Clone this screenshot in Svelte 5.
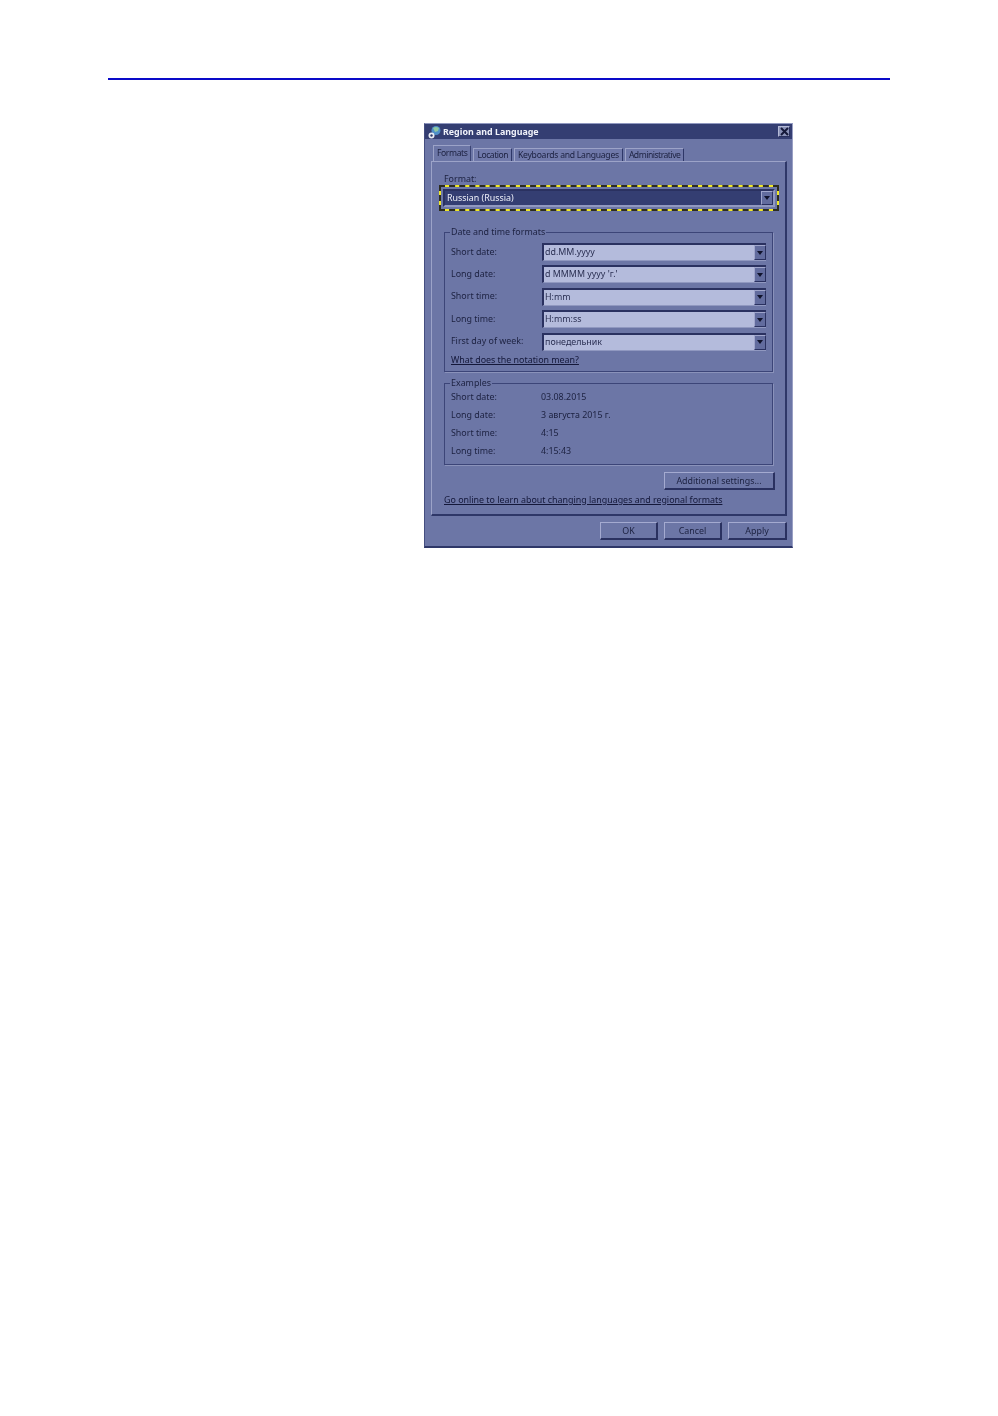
<script>
  const tabs = ['Location', 'Keyboards and Languages', 'Administrative'];
  const formats = [
    ['Short date:', 'dd.MM.yyyy'],
    ['Long date:', "d MMMM yyyy 'г.'"],
    ['Short time:', 'H:mm'],
    ['Long time:', 'H:mm:ss'],
    ['First day of week:', 'понедельник'],
  ];
  const examples = [
    ['Short date:', '03.08.2015'],
    ['Long date:', '3 августа 2015 г.'],
    ['Short time:', '4:15'],
    ['Long time:', '4:15:43'],
  ];
</script>

<div class="page">
  <div class="rule"></div>

  <div class="dialog">
    <div class="titlebar">
      <svg class="globe" width="14" height="14" viewBox="0 0 14 14" aria-hidden="true">
        <circle cx="8" cy="5.5" r="4.5" fill="#4f8fc8" />
        <path d="M5 3 Q8 1 11 3 L10 6 L7 7 Z" fill="#8fc8a0" />
        <circle cx="3.5" cy="10.5" r="3" fill="#e8ecf4" />
        <circle cx="3.5" cy="10.5" r="1.2" fill="#2c3a6c" />
      </svg>
      <span class="title">Region and Language</span>
      <span class="close">
        <svg width="9" height="9" viewBox="0 0 9 9" aria-hidden="true">
          <path d="M1 1 L8 8 M8 1 L1 8" stroke="#15193a" stroke-width="2" />
        </svg>
      </span>
    </div>

    <div class="tabs">
      <span class="tab active">Formats</span>
      {#each tabs as tab}
        <span class="tab">{tab}</span>
      {/each}
    </div>

    <div class="pane">
      <div class="format-label">Format:</div>
      <div class="focus">
        <div class="combo dark">
          <span class="value">Russian (Russia)</span>
          <span class="arrow"><i></i></span>
        </div>
      </div>

      <fieldset class="group formats">
        <legend>Date and time formats</legend>
        {#each formats as [label, value]}
          <div class="row">
            <span class="label">{label}</span>
            <div class="combo">
              <span class="value">{value}</span>
              <span class="arrow"><i></i></span>
            </div>
          </div>
        {/each}
        <div class="link notation">What does the notation mean?</div>
      </fieldset>

      <fieldset class="group examples">
        <legend>Examples</legend>
        {#each examples as [label, value]}
          <div class="example">
            <span>{label}</span>
            <span>{value}</span>
          </div>
        {/each}
      </fieldset>

      <div class="extra">
        <span class="btn additional">Additional settings...</span>
      </div>
      <div class="link online">Go online to learn about changing languages and regional formats</div>
    </div>

    <div class="actions">
      <span class="btn">OK</span>
      <span class="btn">Cancel</span>
      <span class="btn">Apply</span>
    </div>
  </div>
</div>

<style>
  :global(body) {
    margin: 0;
    background: #fff;
  }
  .page {
    height: 1416px;
    padding-top: 78px;
    box-sizing: border-box;
    font-family: "Noto Sans", "Liberation Sans", sans-serif;
    font-size: 8.9px;
    color: #1c2140;
  }
  .rule {
    height: 2px;
    margin: 0 108px;
    background: #0a0ac8;
  }
  .dialog {
    box-sizing: border-box;
    width: 369px;
    height: 425px;
    margin: 43px 0 0 424px;
    background: #6c76a6;
    border: 1px solid #9098c0;
    border-right-color: #9aa0c4;
    border-bottom: 2px solid #2e3768;
    border-left-color: #454e80;
    filter: blur(0.35px);
  }
  .titlebar {
    display: flex;
    align-items: center;
    height: 15px;
    padding: 0 2px 0 3px;
    background: #343e72;
    color: #f0f2fa;
  }
  .globe {
    flex: none;
  }
  .title {
    flex: 1;
    font-weight: 700;
    font-size: 8.9px;
    padding-left: 1px;
  }
  .close {
    display: flex;
    align-items: center;
    justify-content: center;
    width: 12px;
    height: 11px;
    background: #8a92b8;
    border: 1px solid #b4bad6;
    border-right-color: #2a3160;
    border-bottom-color: #2a3160;
    box-sizing: border-box;
  }
  .tabs {
    display: flex;
    align-items: flex-end;
    height: 22px;
    padding-left: 8px;
  }
  .tab {
    box-sizing: border-box;
    height: 13px;
    line-height: 13px;
    padding: 0 3px;
    margin-right: 2px;
    background: #7079aa;
    border: 1px solid #9ca3c8;
    border-bottom: none;
    border-right: 1px solid #2e3768;
    font-size: 8.6px;
    letter-spacing: -0.25px;
    white-space: nowrap;
  }
  .tab:nth-child(2),
  .tab:last-child {
    letter-spacing: -0.5px;
  }
  .tab.active {
    height: 16px;
    line-height: 14px;
    padding: 0 3px;
    letter-spacing: -0.4px;
    background: #6c76a6;
    border-right-color: #3a4374;
  }
  .pane {
    box-sizing: border-box;
    width: 356px;
    height: 355px;
    margin-left: 6px;
    padding: 12px 14px 0 7px;
    background: #6c76a6;
    border: 1px solid #9ca3c8;
    border-right: 2px solid #2e3768;
    border-bottom: 2px solid #2e3768;
  }
  .format-label {
    height: 11px;
    line-height: 9px;
    padding-left: 5px;
  }
  .focus {
    box-sizing: border-box;
    width: 340px;
    height: 26px;
    margin-right: -8px;
    padding: 3px 2px;
    border: 2px dashed #2c2c20;
    background:
      linear-gradient(#6c76a6, #6c76a6) padding-box,
      linear-gradient(#f0e828, #f0e828) border-box;
  }
  .combo {
    display: flex;
    align-items: stretch;
    box-sizing: border-box;
    height: 18px;
    background: #b4bbdc;
    border-top: 2px solid #2a3160;
    border-left: 2px solid #2a3160;
    border-bottom: 1px solid #9098c0;
    color: #2a2f52;
  }
  .combo.dark {
    height: 18px;
    margin-top: -1px;
    background: #343e72;
    color: #eef0fa;
    border-right: 2px solid #9098c0;
    border-bottom-width: 2px;
  }
  .value {
    flex: 1;
    line-height: 14px;
    padding-left: 1px;
    white-space: nowrap;
  }
  .combo.dark .value {
    padding-left: 2px;
    line-height: 13px;
  }
  .arrow {
    display: flex;
    align-items: center;
    justify-content: center;
    width: 12px;
    background: #626c9e;
    border: 1px solid #a0a6cc;
    border-right-color: #2a3160;
    border-bottom-color: #2a3160;
    box-sizing: border-box;
  }
  .arrow i {
    width: 0;
    height: 0;
    border: 3px solid transparent;
    border-top: 4px solid #10132c;
    border-bottom: none;
  }
  .group {
    box-sizing: border-box;
    margin: 0 0 0 5px;
    width: 329px;
    padding: 0 6px;
    border: 1px solid #3c4578;
    box-shadow: 1px 1px 0 #8a92ba;
    min-inline-size: 0;
  }
  .group legend {
    padding: 0 1px;
    margin-left: -1px;
    line-height: 9px;
    height: 11px;
  }
  .formats {
    height: 145px;
    margin-top: 16px;
    padding-top: 5px;
  }
  .row {
    display: grid;
    grid-template-columns: 91px 224px;
    align-items: center;
    height: 18px;
    margin-bottom: 4.4px;
  }
  .label {
    padding-bottom: 2px;
  }
  .notation {
    margin-top: -2px;
  }
  .link {
    line-height: 13px;
    text-decoration: underline;
    color: #14183a;
    white-space: nowrap;
  }
  .examples {
    height: 87px;
    margin-top: 6px;
  }
  .example {
    display: grid;
    grid-template-columns: 90px 1fr;
    align-items: center;
    height: 18px;
  }
  .example:first-of-type {
    margin-top: -2px;
  }
  .extra {
    display: flex;
    justify-content: flex-end;
    margin-top: 7px;
    width: 336px;
  }
  .btn {
    box-sizing: border-box;
    display: flex;
    align-items: center;
    justify-content: center;
    height: 18px;
    padding-bottom: 1px;
    background: #6c76a6;
    border: 1px solid #a4aad0;
    border-right: 2px solid #2a3160;
    border-bottom: 2px solid #2a3160;
    color: #1c2140;
  }
  .additional {
    width: 111px;
  }
  .online {
    margin: 3px 0 0 5px;
  }
  .actions {
    display: flex;
    justify-content: flex-end;
    gap: 6px;
    margin-top: 6px;
    padding-right: 5px;
  }
  .actions .btn {
    width: 58px;
  }
  .actions .btn:last-child {
    width: 59px;
  }
</style>
